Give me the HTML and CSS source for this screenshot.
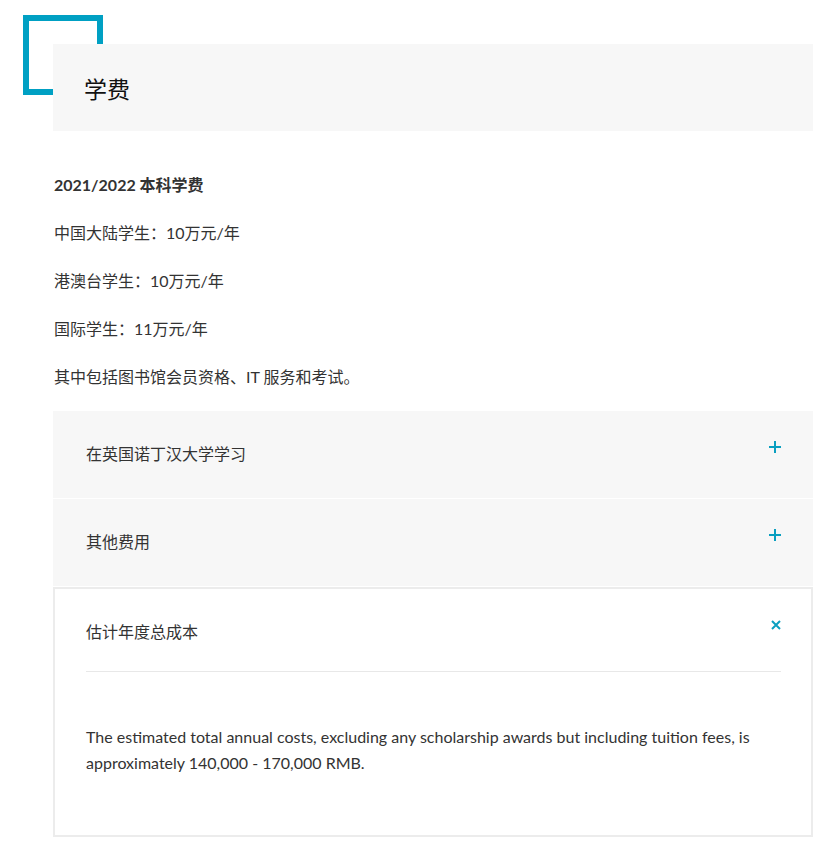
FILE: index.html
```html
<!DOCTYPE html>
<html lang="zh-CN">
<head>
<meta charset="utf-8">
<title>学费</title>
<link rel="stylesheet" href="styles.css">
</head>
<body>
<div class="page">
  <div class="heading-wrap">
    <span class="deco-square"></span>
    <h2 class="heading">学费</h2>
  </div>

  <div class="fees">
    <p class="strong">2021/2022 本科学费</p>
    <p>中国大陆学生：10万元/年</p>
    <p>港澳台学生：10万元/年</p>
    <p>国际学生：11万元/年</p>
    <p>其中包括图书馆会员资格、IT 服务和考试。</p>
  </div>

  <div class="accordion">
    <div class="acc-item">
      <div class="acc-head">
        <span class="acc-title">在英国诺丁汉大学学习</span>
        <svg class="acc-icon" width="12" height="12" viewBox="0 0 12 12"><path d="M6 0v12M0 6h12" stroke="#0a9fc0" stroke-width="2"/></svg>
      </div>
    </div>
    <div class="acc-item">
      <div class="acc-head">
        <span class="acc-title">其他费用</span>
        <svg class="acc-icon" width="12" height="12" viewBox="0 0 12 12"><path d="M6 0v12M0 6h12" stroke="#0a9fc0" stroke-width="2"/></svg>
      </div>
    </div>
    <div class="acc-item open">
      <div class="acc-head">
        <span class="acc-title">估计年度总成本</span>
        <svg class="acc-icon close" width="10" height="10" viewBox="0 0 10 10"><path d="M1 1l8 8M9 1l-8 8" stroke="#0a9fc0" stroke-width="2"/></svg>
      </div>
      <div class="acc-body">
        <p>The estimated total annual costs, excluding any scholarship awards but including tuition fees, is approximately 140,000 - 170,000 RMB.</p>
      </div>
    </div>
  </div>
</div>
</body>
</html>
```

FILE: styles.css
```css
html, body {
  margin: 0;
  padding: 0;
  background: #ffffff;
}

body {
  font-family: "Lato", "Noto Sans CJK SC", sans-serif;
  color: #333333;
  font-size: 16px;
}

.page {
  width: 760px;
  padding-left: 53px;
  padding-bottom: 12px;
}

.heading-wrap {
  position: relative;
  padding-top: 44px;
}

.deco-square {
  position: absolute;
  left: -30px;
  top: 15px;
  width: 68px;
  height: 68px;
  border: 6px solid #00a0c3;
}

.heading {
  position: relative;
  z-index: 1;
  margin: 0;
  height: 87px;
  display: flex;
  align-items: center;
  padding-left: 31px;
  background: #f7f7f7;
  font-family: "Noto Sans CJK SC", sans-serif;
  font-weight: 400;
  font-size: 23px;
  color: #111111;
}

.fees {
  padding-top: 42px;
  padding-bottom: 22px;
}

.fees p {
  margin: 0 0 24px 1px;
  line-height: 24px;
}

.fees p:last-child {
  margin-bottom: 0;
}

.fees .strong {
  font-weight: 700;
}

.accordion {
  display: flex;
  flex-direction: column;
  gap: 1px;
}

.acc-item {
  background: #f7f7f7;
}

.acc-head {
  position: relative;
  padding: 30px 32px 31px 33px;
  line-height: 26px;
}

.acc-icon {
  position: absolute;
  right: 32px;
  top: 30px;
}

.acc-item.open {
  background: #ffffff;
  border: 2px solid #ececec;
}

.acc-item.open .acc-head {
  margin: 0 30px 0 31px;
  padding: 30px 0 26px 0;
  border-bottom: 1px solid #e8e8e8;
}

.acc-item.open .acc-icon {
  right: 0;
  top: 31px;
}

.acc-body {
  padding: 52px 30px 59px 31px;
}

.acc-body p {
  margin: 0;
  line-height: 26px;
}
```
